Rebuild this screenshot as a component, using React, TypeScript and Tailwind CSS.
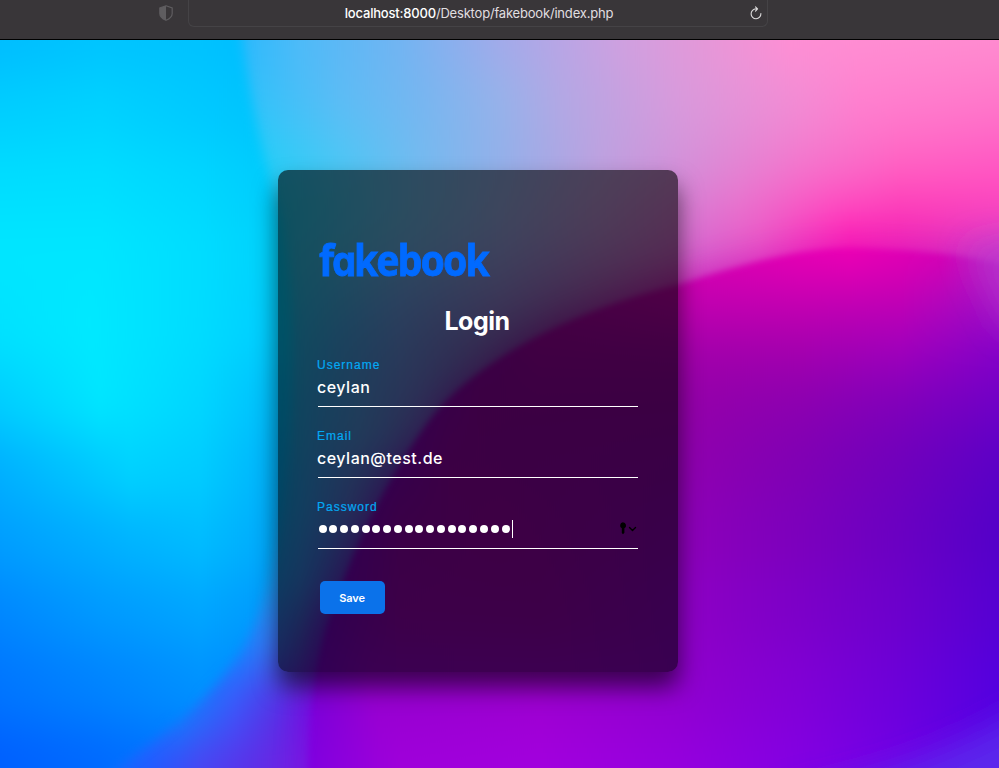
import React from "react";

type Stop = [number, string];
type Row = { y: number; stops: Stop[] };

const BACK: Row[] = [
  { y: 40, stops: [[240, "#2cb9fc"], [300, "#4ebaf8"], [400, "#72b4f2"], [500, "#a2aaea"], [620, "#cfa0e0"], [700, "#e498d8"], [790, "#ff8fd4"], [999, "#ff8cd0"]] },
  { y: 100, stops: [[240, "#2cc2fb"], [340, "#5cbcf5"], [420, "#76b6f0"], [500, "#96b2ea"], [560, "#b2a8e4"], [678, "#d89adc"], [800, "#f28cd4"], [860, "#ff80cf"], [999, "#ff78ca"]] },
  { y: 160, stops: [[260, "#26cef8"], [340, "#4ec6f5"], [420, "#74baf0"], [500, "#92b0ea"], [600, "#bca2e0"], [678, "#d294da"], [800, "#f27ace"], [900, "#ff66c4"], [999, "#ff5cc4"]] },
  { y: 210, stops: [[280, "#20ccf0"], [400, "#68c0ee"], [500, "#9ab0e8"], [600, "#c29adc"], [678, "#d67ed4"], [740, "#ea70cc"], [830, "#ff4cc0"], [900, "#ff3cb8"], [999, "#ff40bc"]] },
  { y: 250, stops: [[280, "#28c8ee"], [400, "#6eb8ee"], [500, "#9aa4e8"], [600, "#bc88d8"], [678, "#d46cd0"], [760, "#e850c6"], [850, "#fa10b4"], [930, "#e428bc"], [999, "#cc40cc"]] },
  { y: 300, stops: [[280, "#20c4ee"], [400, "#6ca2ec"], [500, "#9488d8"], [600, "#b458c4"], [678, "#cc30c0"], [999, "#a42cd0"]] },
  { y: 350, stops: [[280, "#1cbcf0"], [340, "#42a2e8"], [400, "#6690e0"], [480, "#8068c8"], [560, "#9030b0"], [999, "#9c20c8"]] },
  { y: 420, stops: [[280, "#18b2ee"], [320, "#38a0e8"], [360, "#5296e0"], [420, "#7070d4"], [480, "#8040c0"], [999, "#8020c0"]] },
  { y: 500, stops: [[280, "#14a8f0"], [310, "#3498ec"], [350, "#5878dc"], [400, "#7040d0"], [999, "#7020c8"]] },
  { y: 570, stops: [[270, "#14a0f4"], [300, "#348aec"], [340, "#5658dc"], [380, "#7020d0"]] },
  { y: 640, stops: [[240, "#108cff"], [270, "#347cf8"], [300, "#4a58d8"], [330, "#6820d0"]] },
  { y: 700, stops: [[180, "#0888ff"], [235, "#3a58fa"], [270, "#5038e8"], [310, "#7010e0"]] },
  { y: 768, stops: [[100, "#0870ff"], [150, "#2458ff"], [200, "#4a44f2"], [250, "#5c30e8"], [310, "#7a18e2"]] },
];

const CYAN: Row[] = [
  { y: 40, stops: [[0, "#00bdff"], [100, "#00c4ff"], [200, "#00c2ff"], [260, "#00bcff"]] },
  { y: 110, stops: [[0, "#00ceff"], [100, "#00d2ff"], [200, "#00c9ff"], [270, "#00c2fd"]] },
  { y: 180, stops: [[0, "#00ddff"], [100, "#00deff"], [200, "#00d6ff"], [280, "#00cafc"]] },
  { y: 250, stops: [[0, "#00e6ff"], [100, "#00e6ff"], [200, "#00ddff"], [280, "#00d0fc"]] },
  { y: 330, stops: [[0, "#00e2ff"], [90, "#00e9ff"], [200, "#00dcff"], [280, "#00ccff"]] },
  { y: 400, stops: [[0, "#00cfff"], [100, "#00e6ff"], [200, "#00d6ff"], [280, "#00bcfc"]] },
  { y: 470, stops: [[0, "#00b0ff"], [130, "#00d2ff"], [200, "#00ccff"], [280, "#00b0fc"]] },
  { y: 540, stops: [[0, "#009eff"], [130, "#00b4ff"], [200, "#00bcff"], [280, "#00a8fc"]] },
  { y: 610, stops: [[0, "#0088ff"], [100, "#009aff"], [200, "#00a6ff"], [280, "#0098fc"]] },
  { y: 680, stops: [[0, "#0076ff"], [100, "#0084ff"], [200, "#0092ff"], [280, "#0088ff"]] },
  { y: 768, stops: [[0, "#0060ff"], [100, "#006aff"], [200, "#0078ff"]] },
];

const PURPLE: Row[] = [
  { y: 250, stops: [[500, "#b000b0"], [678, "#d400b0"], [800, "#ea00b4"], [850, "#f000b4"], [940, "#dc00b4"], [999, "#b828c4"]] },
  { y: 300, stops: [[500, "#a800a8"], [678, "#c400b0"], [800, "#c600b2"], [900, "#c200b4"], [999, "#a010c4"]] },
  { y: 350, stops: [[440, "#8200b0"], [540, "#a000a8"], [678, "#a200aa"], [800, "#a400ae"], [900, "#a000bc"], [999, "#8600c8"]] },
  { y: 400, stops: [[400, "#8000c4"], [480, "#9600a8"], [678, "#9400a8"], [800, "#8c00b0"], [900, "#8000ba"], [999, "#7000c6"]] },
  { y: 460, stops: [[370, "#7800c8"], [450, "#9600aa"], [678, "#9000ae"], [800, "#8000b4"], [900, "#7000bc"], [999, "#5c00c6"]] },
  { y: 530, stops: [[340, "#7800c8"], [400, "#9200b0"], [500, "#9a00aa"], [678, "#8e00b8"], [800, "#7c00bc"], [900, "#6a00c2"], [999, "#5400c8"]] },
  { y: 610, stops: [[320, "#7400c8"], [400, "#9800b4"], [540, "#9a00b2"], [678, "#8e00c4"], [800, "#7c00c8"], [900, "#6c00cc"], [999, "#5600d2"]] },
  { y: 680, stops: [[305, "#7800d4"], [370, "#9400ce"], [540, "#9a00cc"], [678, "#9000cc"], [800, "#8000d4"], [900, "#6c00d8"], [999, "#5400de"]] },
  { y: 730, stops: [[310, "#7c00dc"], [380, "#9a00d4"], [540, "#a000d6"], [678, "#9200d6"], [800, "#8200dc"], [900, "#6c00e0"], [999, "#5400e4"]] },
  { y: 768, stops: [[310, "#8200e0"], [400, "#a000dc"], [540, "#a200e0"], [678, "#9600e0"], [780, "#8600e4"], [999, "#6000ea"]] },
];

function Shade({ id, rows }: { id: string; rows: Row[] }) {
  return (
    <>
      <defs>
        {rows.map((r, i) => (
          <linearGradient key={i} id={id + i} gradientUnits="userSpaceOnUse" x1="0" y1="0" x2="999" y2="0">
            {r.stops.map(([x, c], j) => (
              <stop key={j} offset={x / 999} stopColor={c} />
            ))}
          </linearGradient>
        ))}
      </defs>
      <g filter="url(#rowBlend)">
        {rows.map((r, i) => {
          const top = i === 0 ? -120 : (rows[i - 1].y + r.y) / 2;
          const bottom = i === rows.length - 1 ? 930 : (r.y + rows[i + 1].y) / 2;
          return <rect key={i} x="-40" y={top} width="1080" height={bottom - top + 0.5} fill={`url(#${id + i})`} />;
        })}
      </g>
    </>
  );
}

const HILL =
  "M306 820 C311 735 308 690 328 625 C354 545 387 480 427 424 C478 354 590 306 678 285 C745 264 795 249 850 248 C900 250 950 252 1000 264 L1100 290 L1100 900 L306 900 Z";

function Wallpaper() {
  return (
    <svg className="absolute inset-0 h-full w-full" viewBox="0 40 999 728" preserveAspectRatio="none" aria-hidden="true">
      <defs>
        <filter id="rowBlend" filterUnits="userSpaceOnUse" x="-40" y="-120" width="1080" height="1050" colorInterpolationFilters="sRGB">
          <feGaussianBlur stdDeviation="0 25" />
        </filter>
        <filter id="b3" filterUnits="userSpaceOnUse" x="-200" y="-100" width="1400" height="1100"><feGaussianBlur stdDeviation="3" /></filter>
        <filter id="b6" filterUnits="userSpaceOnUse" x="-200" y="-100" width="1400" height="1100"><feGaussianBlur stdDeviation="6" /></filter>
        <filter id="b16" filterUnits="userSpaceOnUse" x="-200" y="-100" width="1400" height="1100"><feGaussianBlur stdDeviation="16" /></filter>
        <mask id="cyanMask" maskUnits="userSpaceOnUse" x="0" y="0" width="999" height="800">
          <path filter="url(#b6)" fill="#fff" d="M-100 -100 L236 -100 L242 40 C252 110 264 165 282 220 C298 330 292 440 278 530 C266 610 244 660 200 700 C165 735 130 755 95 785 L60 900 L-100 900 Z" />
        </mask>
        <mask id="hillMask" maskUnits="userSpaceOnUse" x="0" y="0" width="999" height="800">
          <path filter="url(#b16)" fill="#fff" fillOpacity="0.5" d={HILL} />
          <path filter="url(#b3)" fill="#fff" d={HILL} />
        </mask>
      </defs>
      <Shade id="back" rows={BACK} />
      <g mask="url(#cyanMask)"><Shade id="cyan" rows={CYAN} /></g>
      <g mask="url(#hillMask)"><Shade id="hill" rows={PURPLE} /></g>
      <path filter="url(#b16)" fill="#bc38cc" fillOpacity="0.65" d="M968 246 L1060 240 L1060 350 L1004 325 Z" />
      <path filter="url(#b16)" fill="#5a30ee" fillOpacity="0.8" d="M790 796 C880 775 940 758 1010 718 L1100 670 L1100 900 L790 900 Z" />
    </svg>
  );
}

function BrowserBar() {
  return (
    <header className="flex h-10 items-start border-b border-black bg-[#393639]">
      <div className="flex h-[26px] w-[188px] shrink-0 items-center justify-end pr-[15px]">
        <svg className="h-4 w-[14px]" viewBox="0 0 14 16" fill="none">
          <path d="M7 .8 13.2 3v5.4c0 3-2.4 5.2-6.2 6.9C3.200 13.600.8 11.400.8 8.400V3Z" stroke="#5f5d60" strokeWidth="1.200" />
          <path d="M7 .8v14.500C3.200 13.600.8 11.400.8 8.400V3Z" fill="#5f5d60" />
        </svg>
      </div>
      <div className="flex h-[27px] w-[580px] items-center rounded-b-md border border-t-0 border-[#454346]">
        <p className="flex-1 pl-[19px] text-center font-['Inter',sans-serif] text-[13px] leading-[26px] tracking-[-0.19px] text-[#e0dfe0]">
          <span className="font-medium text-white">localhost:8000</span>/Desktop/fakebook/index.php
        </p>
        <svg className="mr-[5px] h-[14px] w-[12px]" viewBox="0 0 12 14" fill="none" stroke="#dddcdd" strokeWidth="1.100" strokeLinecap="round" strokeLinejoin="round">
          <path d="M10.900 7.600A4.900 4.900 0 1 1 6 2.900h1.200M5.500.8 7.600 2.900 5.500 5.200" />
        </svg>
      </div>
    </header>
  );
}

function Field({ label, children }: { label: string; children: React.ReactNode }) {
  return (
    <div className="mb-[21px] h-[50px] border-b border-white">
      <p className="-ml-px h-[17px] font-['Liberation_Sans',sans-serif] text-[12px] leading-[16px] tracking-[1px] text-[#03a9f4] [-webkit-text-stroke:0.2px_#03a9f4]">{label}</p>
      <div className="flex h-[25px] items-center font-['Inter',sans-serif] text-[16px] font-medium tracking-[0.5px] text-white">{children}</div>
    </div>
  );
}

export default function App() {
  return (
    <div className="flex h-[768px] w-[999px] flex-col overflow-hidden">
      <BrowserBar />
      <main className="relative flex-1 pt-[130px] pl-[278px]">
        <Wallpaper />
        <section className="relative h-[502px] w-[400px] rounded-[10px] bg-black/60 px-10 pt-[60px] shadow-[0_15px_25px_rgba(0,0,0,0.6)]">
          <div className="h-[61px] origin-left scale-x-[0.92] pl-px font-['Noto_Sans',sans-serif] text-[42.500px] leading-[60px] font-bold tracking-[-2.1px] text-[#006aff] [-webkit-text-stroke:0.9px_#006aff]">
            f<span className="font-['Inter',sans-serif] text-[41px] [font-feature-settings:'cv11']">a</span>kebook
          </div>
          <h1 className="mt-[15px] h-[31px] pr-[2px] text-center font-['Inter',sans-serif] text-[25px] leading-[30px] font-bold tracking-[-0.5px] text-white">Login</h1>
          <form className="mt-[20px]">
            <Field label="Username"><span className="-ml-px">ceylan</span></Field>
            <Field label="Email"><span className="-ml-px">ceylan@test.de</span></Field>
            <Field label="Password">
              <div className="flex gap-[2.770px] pl-[0.5px]">
                {Array.from({ length: 18 }, (_, i) => (
                  <span key={i} className="h-2 w-2 rounded-full bg-white" />
                ))}
              </div>
              <span className="ml-[2px] h-[18px] w-px bg-white" />
              <svg className="ml-auto h-[13px] w-[19px]" viewBox="0 0 19 13">
                <path d="M3.900.3a3.200 3.200 0 0 1 1.500 6v4.400L4 12.300 2.800 11V6.300A3.200 3.200 0 0 1 3.900.3Z" fill="#000" />
                <path d="m10.500 5.500 3 3 3-3" fill="none" stroke="#000" strokeWidth="1.400" strokeLinecap="round" strokeLinejoin="round" />
              </svg>
            </Field>
            <button type="button" className="mt-[32px] ml-[2px] block h-[33px] w-[65px] rounded-[5px] bg-[#0b72ea] pt-px pr-px font-['Inter',sans-serif] text-[11px] font-semibold tracking-[-0.1px] text-white">Save</button>
          </form>
        </section>
      </main>
    </div>
  );
}
